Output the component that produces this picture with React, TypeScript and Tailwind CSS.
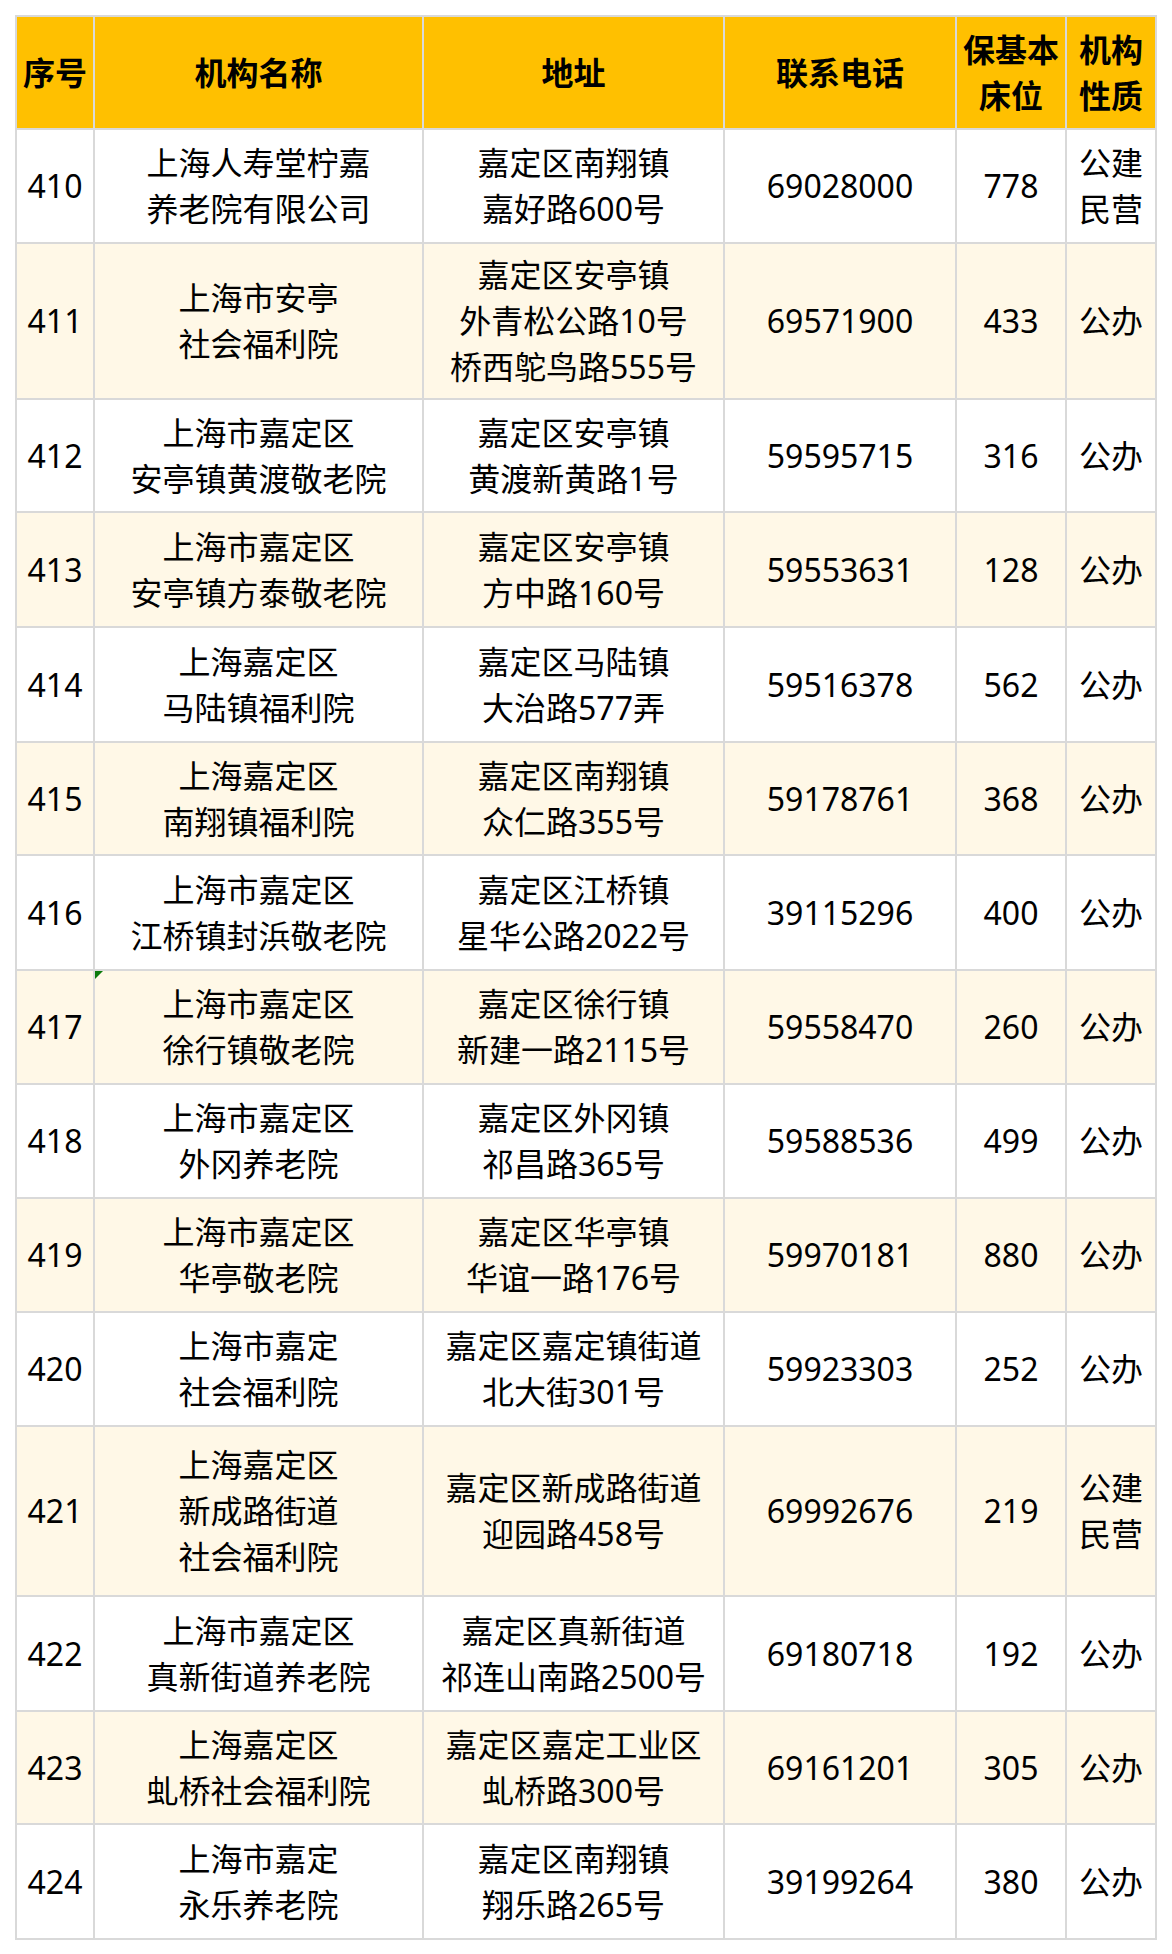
import React from "react";

type Row = {
  no: string;
  name: string[];
  addr: string[];
  tel: string;
  beds: string;
  kind: string[];
  h: string;
  mark?: boolean;
};

const rows: Row[] = [
  { no: "410", name: ["上海人寿堂柠嘉", "养老院有限公司"], addr: ["嘉定区南翔镇", "嘉好路600号"], tel: "69028000", beds: "778", kind: ["公建", "民营"], h: "h-[112px]" },
  { no: "411", name: ["上海市安亭", "社会福利院"], addr: ["嘉定区安亭镇", "外青松公路10号", "桥西鸵鸟路555号"], tel: "69571900", beds: "433", kind: ["公办"], h: "h-[154px]" },
  { no: "412", name: ["上海市嘉定区", "安亭镇黄渡敬老院"], addr: ["嘉定区安亭镇", "黄渡新黄路1号"], tel: "59595715", beds: "316", kind: ["公办"], h: "h-[111px]" },
  { no: "413", name: ["上海市嘉定区", "安亭镇方泰敬老院"], addr: ["嘉定区安亭镇", "方中路160号"], tel: "59553631", beds: "128", kind: ["公办"], h: "h-[113px]" },
  { no: "414", name: ["上海嘉定区", "马陆镇福利院"], addr: ["嘉定区马陆镇", "大治路577弄"], tel: "59516378", beds: "562", kind: ["公办"], h: "h-[113px]" },
  { no: "415", name: ["上海嘉定区", "南翔镇福利院"], addr: ["嘉定区南翔镇", "众仁路355号"], tel: "59178761", beds: "368", kind: ["公办"], h: "h-[111px]" },
  { no: "416", name: ["上海市嘉定区", "江桥镇封浜敬老院"], addr: ["嘉定区江桥镇", "星华公路2022号"], tel: "39115296", beds: "400", kind: ["公办"], h: "h-[113px]" },
  { no: "417", name: ["上海市嘉定区", "徐行镇敬老院"], addr: ["嘉定区徐行镇", "新建一路2115号"], tel: "59558470", beds: "260", kind: ["公办"], h: "h-[112px]", mark: true },
  { no: "418", name: ["上海市嘉定区", "外冈养老院"], addr: ["嘉定区外冈镇", "祁昌路365号"], tel: "59588536", beds: "499", kind: ["公办"], h: "h-[112px]" },
  { no: "419", name: ["上海市嘉定区", "华亭敬老院"], addr: ["嘉定区华亭镇", "华谊一路176号"], tel: "59970181", beds: "880", kind: ["公办"], h: "h-[112px]" },
  { no: "420", name: ["上海市嘉定", "社会福利院"], addr: ["嘉定区嘉定镇街道", "北大街301号"], tel: "59923303", beds: "252", kind: ["公办"], h: "h-[112px]" },
  { no: "421", name: ["上海嘉定区", "新成路街道", "社会福利院"], addr: ["嘉定区新成路街道", "迎园路458号"], tel: "69992676", beds: "219", kind: ["公建", "民营"], h: "h-[168px]" },
  { no: "422", name: ["上海市嘉定区", "真新街道养老院"], addr: ["嘉定区真新街道", "祁连山南路2500号"], tel: "69180718", beds: "192", kind: ["公办"], h: "h-[113px]" },
  { no: "423", name: ["上海嘉定区", "虬桥社会福利院"], addr: ["嘉定区嘉定工业区", "虬桥路300号"], tel: "69161201", beds: "305", kind: ["公办"], h: "h-[111px]" },
  { no: "424", name: ["上海市嘉定", "永乐养老院"], addr: ["嘉定区南翔镇", "翔乐路265号"], tel: "39199264", beds: "380", kind: ["公办"], h: "h-[113px]" },
];

function Lines({ lines }: { lines: string[] }) {
  return (
    <div className="flex flex-col items-center">
      {lines.map((l, i) => (
        <span key={i} className="whitespace-nowrap">
          {l}
        </span>
      ))}
    </div>
  );
}

const cell = "flex items-center justify-center text-center";

export default function App() {
  return (
    <div
      className="min-h-[1954px] bg-white pt-[15px] pl-[15px] text-black"
      style={{ fontFamily: '"Noto Sans", "Noto Sans CJK SC", sans-serif' }}
    >
      <div className="grid w-[1142px] grid-cols-[76px_327px_299px_230px_108px_88px] gap-[2px] bg-[#D9D9D9] p-[2px] text-[32px] leading-[46px]">
        {/* header */}
        <div className={`${cell} h-[111px] bg-[#FFC000] font-bold`}>序号</div>
        <div className={`${cell} h-[111px] bg-[#FFC000] font-bold`}>机构名称</div>
        <div className={`${cell} h-[111px] bg-[#FFC000] font-bold`}>地址</div>
        <div className={`${cell} h-[111px] bg-[#FFC000] font-bold`}>联系电话</div>
        <div className={`${cell} h-[111px] bg-[#FFC000] font-bold`}>
          <Lines lines={["保基本", "床位"]} />
        </div>
        <div className={`${cell} h-[111px] bg-[#FFC000] font-bold`}>
          <Lines lines={["机构", "性质"]} />
        </div>

        {rows.map((r, i) => {
          const bg = i % 2 === 1 ? "bg-[#FFF8E7]" : "bg-white";
          return (
            <React.Fragment key={r.no}>
              <div className={`${cell} ${r.h} ${bg}`}>{r.no}</div>
              <div className={`${cell} ${r.h} ${bg} relative`}>
                {r.mark && (
                  <span className="absolute left-0 top-0 h-0 w-0 border-r-[8px] border-t-[8px] border-r-transparent border-t-[#0B7A0B]" />
                )}
                <Lines lines={r.name} />
              </div>
              <div className={`${cell} ${r.h} ${bg}`}>
                <Lines lines={r.addr} />
              </div>
              <div className={`${cell} ${r.h} ${bg}`}>{r.tel}</div>
              <div className={`${cell} ${r.h} ${bg}`}>{r.beds}</div>
              <div className={`${cell} ${r.h} ${bg}`}>
                <Lines lines={r.kind} />
              </div>
            </React.Fragment>
          );
        })}
      </div>
    </div>
  );
}
